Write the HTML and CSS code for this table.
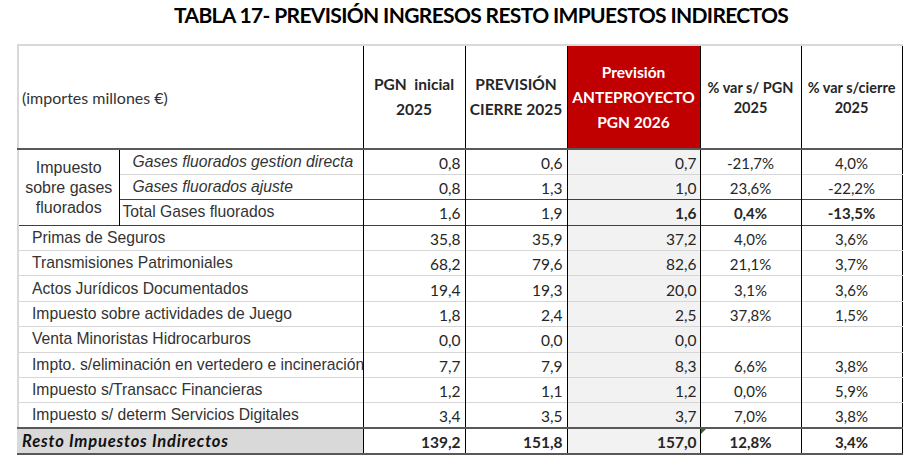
FILE: index.html
```html
<!DOCTYPE html>
<html lang="es">
<head>
<meta charset="utf-8">
<title>Tabla 17</title>
<link rel="stylesheet" href="styles.css">
</head>
<body>
<div class="page">
  <h1 class="title">TABLA 17- PREVISIÓN INGRESOS RESTO IMPUESTOS INDIRECTOS</h1>
  <table class="t">
    <colgroup>
      <col class="c-a"><col class="c-b"><col class="c-n"><col class="c-n"><col class="c-p"><col class="c-v"><col class="c-v">
    </colgroup>
    <thead>
      <tr class="hrow">
        <th colspan="2" class="unit">(importes millones €)</th>
        <th class="h">PGN&nbsp; inicial<br>2025</th>
        <th class="h">PREVISIÓN<br>CIERRE 2025</th>
        <th class="h red">Previsión<br>ANTEPROYECTO<br>PGN 2026</th>
        <th class="h sm">% var s/ PGN<br>2025</th>
        <th class="h sm">% var s/cierre<br>2025</th>
      </tr>
    </thead>
    <tbody>
      <tr>
        <td rowspan="3" class="grp">Impuesto<br>sobre gases<br>fluorados</td>
        <td class="sub it">Gases fluorados gestion directa</td>
        <td class="n">0,8</td><td class="n">0,6</td><td class="n g">0,7</td><td class="v">-21,7%</td><td class="v">4,0%</td>
      </tr>
      <tr>
        <td class="sub it">Gases fluorados ajuste</td>
        <td class="n">0,8</td><td class="n">1,3</td><td class="n g">1,0</td><td class="v">23,6%</td><td class="v">-22,2%</td>
      </tr>
      <tr class="tot">
        <td class="sub2">Total Gases fluorados</td>
        <td class="n">1,6</td><td class="n">1,9</td><td class="n g b">1,6</td><td class="v b">0,4%</td><td class="v b">-13,5%</td>
      </tr>
      <tr class="sep">
        <td colspan="2" class="lab">Primas de Seguros</td>
        <td class="n">35,8</td><td class="n">35,9</td><td class="n g">37,2</td><td class="v">4,0%</td><td class="v">3,6%</td>
      </tr>
      <tr>
        <td colspan="2" class="lab">Transmisiones Patrimoniales</td>
        <td class="n">68,2</td><td class="n">79,6</td><td class="n g">82,6</td><td class="v">21,1%</td><td class="v">3,7%</td>
      </tr>
      <tr>
        <td colspan="2" class="lab">Actos Jurídicos Documentados</td>
        <td class="n">19,4</td><td class="n">19,3</td><td class="n g">20,0</td><td class="v">3,1%</td><td class="v">3,6%</td>
      </tr>
      <tr>
        <td colspan="2" class="lab">Impuesto sobre actividades de Juego</td>
        <td class="n">1,8</td><td class="n">2,4</td><td class="n g">2,5</td><td class="v">37,8%</td><td class="v">1,5%</td>
      </tr>
      <tr>
        <td colspan="2" class="lab">Venta Minoristas Hidrocarburos</td>
        <td class="n">0,0</td><td class="n">0,0</td><td class="n g">0,0</td><td class="v"></td><td class="v"></td>
      </tr>
      <tr>
        <td colspan="2" class="lab">Impto. s/eliminación en vertedero e incineración</td>
        <td class="n">7,7</td><td class="n">7,9</td><td class="n g">8,3</td><td class="v">6,6%</td><td class="v">3,8%</td>
      </tr>
      <tr>
        <td colspan="2" class="lab">Impuesto s/Transacc Financieras</td>
        <td class="n">1,2</td><td class="n">1,1</td><td class="n g">1,2</td><td class="v">0,0%</td><td class="v">5,9%</td>
      </tr>
      <tr>
        <td colspan="2" class="lab">Impuesto s/ determ Servicios Digitales</td>
        <td class="n">3,4</td><td class="n">3,5</td><td class="n g">3,7</td><td class="v">7,0%</td><td class="v">3,8%</td>
      </tr>
      <tr class="last">
        <td colspan="2" class="lab-tot">Resto Impuestos Indirectos</td>
        <td class="n b">139,2</td><td class="n b">151,8</td><td class="n g b">157,0</td><td class="v b flag">12,8%</td><td class="v b">3,4%</td>
      </tr>
    </tbody>
  </table>
</div>
</body>
</html>
```

FILE: styles.css
```css
html, body {
  margin: 0;
  padding: 0;
  background: #ffffff;
}

body {
  font-family: "Liberation Sans", Arial, sans-serif;
  color: #1a1a1a;
}

.page {
  padding-left: 17px;
  width: 884px;
}

.title {
  margin: 0 0 0 157px;
  padding-top: 2px;
  height: 42px;
  font-family: Lato, "Open Sans", sans-serif;
  font-weight: 700;
  font-size: 21px;
  letter-spacing: -0.65px;
  line-height: 26px;
  color: #000;
  white-space: nowrap;
}

.t {
  border-collapse: collapse;
  table-layout: fixed;
  width: 884px;
  border-top: 2px solid #d9d9d9;
  border-left: 2px solid #d9d9d9;
  border-right: 1px solid #000;
  border-bottom: 2px solid #595959;
}

.c-a { width: 101px; }
.c-b { width: 244px; }
.c-n { width: 102px; }
.c-p { width: 133px; }
.c-v { width: 101px; }

.t td, .t th {
  padding: 0;
  overflow: hidden;
  white-space: nowrap;
}

.hrow th {
  height: 100px;
  border-bottom: 2px solid #595959;
  border-left: 1px solid #000;
}

.unit {
  text-align: left;
  font-family: Lato, "Open Sans", sans-serif;
  font-weight: 400;
  font-size: 16px;
  color: #333;
  padding-left: 3px !important;
  vertical-align: middle;
}

.h {
  font-family: Lato, "Open Sans", sans-serif;
  font-weight: 700;
  font-size: 15.5px;
  line-height: 25px;
  color: #262626;
  text-align: center;
  vertical-align: middle;
}

.h.sm {
  font-size: 14.5px;
  line-height: 20px;
  padding-top: 2px !important;
}

.h.red {
  background: #c00000;
  color: #ffffff;
}

tbody tr {
  height: 25.4px;
}

tbody td {
  border-top: 1px solid #d6d6d6;
  font-size: 15.7px;
  vertical-align: middle;
}

.grp {
  text-align: center;
  font-size: 16px;
  line-height: 20px;
  color: #333;
  border-right: 1px solid #000;
  border-top: 1px solid #d6d6d6;
  padding-top: 2px !important;
}

.sub {
  padding-left: 13px !important;
  color: #333;
}

.it {
  font-style: italic;
}

.sub2 {
  padding-left: 3px !important;
  color: #333;
}

.tot .sub2, .tot .n, .tot .v {
  border-top: 1px solid #404040;
}

.sep td {
  border-top: 1px solid #404040;
}

.lab {
  padding-left: 13px !important;
  color: #333;
}

.lab-tot {
  padding-left: 3px !important;
  background: #d9d9d9;
  font-family: Lato, "Open Sans", sans-serif;
  font-weight: 700;
  font-style: italic;
  font-size: 16.5px;
  letter-spacing: 0.8px;
  color: #111;
}

.last td {
  border-top: 2px solid #595959;
}

.n {
  text-align: right;
  padding-right: 4px !important;
  padding-top: 2px !important;
  font-family: Lato, "Open Sans", sans-serif;
  font-size: 15.5px;
  color: #262626;
  border-left: 1px solid #000;
}

.n.g {
  background: #f2f2f2;
  padding-right: 3px !important;
}

.v {
  text-align: center;
  padding-top: 2px !important;
  font-family: Lato, "Open Sans", sans-serif;
  font-size: 15px;
  color: #262626;
  border-left: 1px solid #000;
}

.b {
  font-weight: 700;
}

.flag {
  position: relative;
}

.flag::before {
  content: "";
  position: absolute;
  left: 0;
  top: 0;
  border-style: solid;
  border-width: 5px 5px 0 0;
  border-color: #1e7b1e transparent transparent transparent;
}
```
